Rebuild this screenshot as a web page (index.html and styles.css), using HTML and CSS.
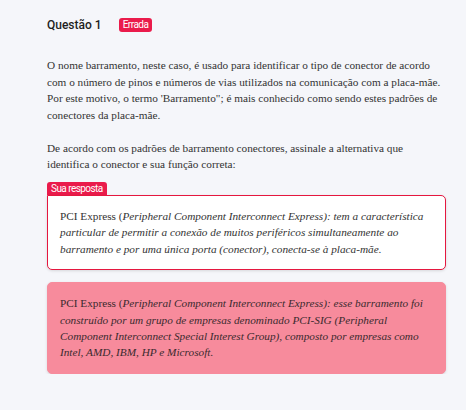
FILE: index.html
```html
<!DOCTYPE html>
<html lang="pt-BR">
<head>
<meta charset="utf-8">
<link rel="stylesheet" href="styles.css">
</head>
<body>
<main class="question">
  <header class="q-head">
    <h2 class="q-title">Questão 1</h2>
    <span class="badge">Errada</span>
  </header>
  <div class="q-text">
    <p>O nome barramento, neste caso, é usado para identificar o tipo de conector de acordo com o número de pinos e números de vias utilizados na comunicação com a placa-mãe. Por este motivo, o termo 'Barramento"; é mais conhecido como sendo estes padrões de conectores da placa-mãe.</p>
    <p>De acordo com os padrões de barramento conectores, assinale a alternativa que identifica o conector e sua função correta:</p>
  </div>
  <section class="answer">
    <span class="tab">Sua resposta</span>
    <div class="card card-mine">PCI Express (<em>Peripheral Component Interconnect Express): tem a característica particular de permitir a conexão de muitos periféricos simultaneamente ao barramento e por uma única porta (conector), conecta-se à placa-mãe.</em></div>
  </section>
  <div class="card card-wrong">PCI Express (<em>Peripheral Component Interconnect Express): esse barramento foi construído por um grupo de empresas denominado PCI-SIG (Peripheral Component Interconnect Special Interest Group), composto por empresas como Intel, AMD, IBM, HP e Microsoft.</em></div>
</main>
</body>
</html>
```
FILE: styles.css
```css
html, body {
  margin: 0;
  padding: 0;
  background: #f5f6fa;
}
body {
  font-family: "Liberation Serif", "Times New Roman", serif;
  color: #333;
}
.question {
  width: 399px;
  padding: 17px 0 0 47px;
  display: flex;
  flex-direction: column;
}
.q-head {
  display: flex;
  align-items: center;
  gap: 17px;
  height: 16px;
}
.q-title {
  margin: 0;
  font-family: Roboto, "Liberation Sans", sans-serif;
  font-size: 12px;
  font-weight: 500;
  color: #1e1e1e;
}
.badge {
  font-family: Roboto, "Liberation Sans", sans-serif;
  font-size: 10px;
  letter-spacing: -0.5px;
  line-height: 14px;
  color: #fff;
  background: #ea1b4b;
  padding: 0 4px;
  border-radius: 3px;
}
.q-text {
  margin-top: 24px;
  font-size: 11.25px;
  line-height: 16.67px;
}
.q-text p {
  margin: 0 0 16px;
}
.q-text p:last-child {
  margin-bottom: 9px;
}
.answer {
  display: flex;
  flex-direction: column;
  align-items: flex-start;
}
.tab {
  font-family: Roboto, "Liberation Sans", sans-serif;
  font-size: 10px;
  letter-spacing: -0.55px;
  line-height: 13px;
  color: #fff;
  background: #ea1b4b;
  padding: 0 4px;
  border-radius: 3px 3px 0 0;
}
.card {
  align-self: stretch;
  box-sizing: border-box;
  font-size: 11.25px;
  line-height: 16.4px;
  padding: 12px;
  border-radius: 5px;
  box-shadow: 0 1px 3px rgba(0, 0, 0, 0.12);
}
.card-mine {
  background: #fff;
  border: 1px solid #e5173f;
  border-top-left-radius: 0;
}
.card-wrong {
  margin-top: 12px;
  background: #f78b9c;
  border: 1px solid #f78b9c;
  color: #3a2a2e;
}
```
